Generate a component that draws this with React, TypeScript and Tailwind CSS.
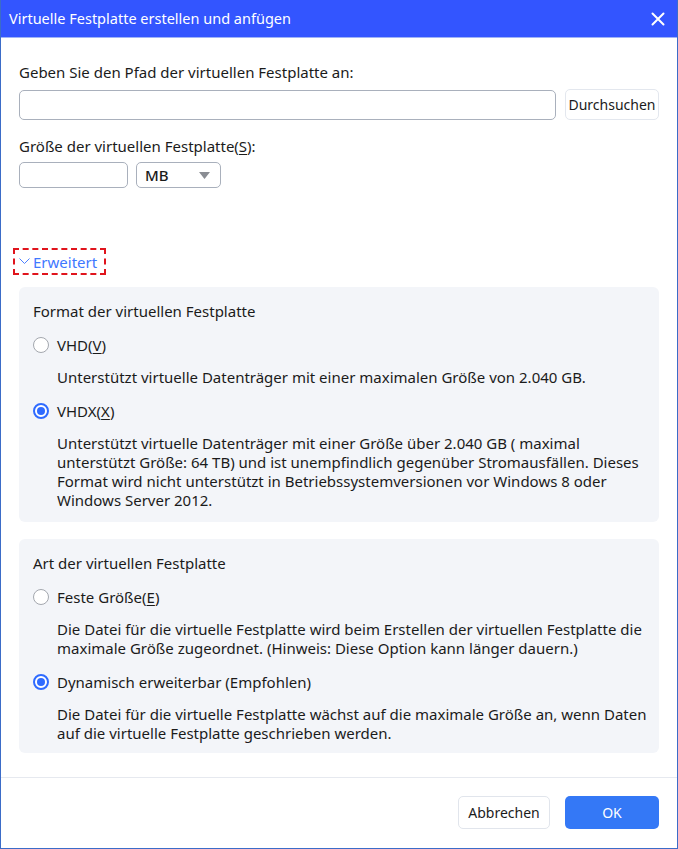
import React from 'react';

const font = { fontFamily: '"Noto Sans", "Open Sans", Arial, sans-serif' };

function Radio({ checked }: { checked?: boolean }) {
  return (
    <svg width="16" height="16" viewBox="0 0 16 16" className="shrink-0">
      {checked ? (
        <>
          <circle cx="8" cy="8" r="7" fill="#ffffff" stroke="#2f6bff" strokeWidth="2" />
          <circle cx="8" cy="8" r="4" fill="#2f6bff" />
        </>
      ) : (
        <circle cx="8" cy="8" r="7.5" fill="#ffffff" stroke="#a3a7ae" strokeWidth="1" />
      )}
    </svg>
  );
}

function Option({
  label,
  hotkey,
  checked,
  lines,
}: {
  label: string;
  hotkey?: string;
  checked?: boolean;
  lines: string[];
}) {
  return (
    <div className="mt-[14px]">
      <div className="flex items-center gap-[8px] h-5">
        <Radio checked={checked} />
        <span className="text-[15px] leading-5 text-[#1b1b1b]">
          {label}
          {hotkey && (
            <>
              (<span className="underline underline-offset-2">{hotkey}</span>)
            </>
          )}
        </span>
      </div>
      <div className="mt-[13px] ml-[24px] text-[15px] leading-[19px] text-[#1b1b1b] whitespace-nowrap">
        {lines.map((l) => (
          <div key={l}>{l}</div>
        ))}
      </div>
    </div>
  );
}

export default function App() {
  return (
    <div
      style={font}
      className="w-[678px] h-[849px] bg-white border-x border-b border-[#3b6cc8] flex flex-col"
    >
      {/* Title bar */}
      <div className="h-[38px] bg-[#3355ff] border-b border-[#9fb3f7] flex items-center justify-between pl-2 pr-3 shrink-0">
        <span className="text-white text-[14.5px]">Virtuelle Festplatte erstellen und anfügen</span>
        <svg width="14" height="14" viewBox="0 0 14 14">
          <path d="M1.5 1.5 L12.5 12.5 M12.5 1.5 L1.5 12.5" stroke="#ffffff" strokeWidth="2" strokeLinecap="round" />
        </svg>
      </div>

      {/* Body */}
      <div className="flex-1 px-[18px]">
        <div className="mt-[24px] h-5 leading-5 text-[15px] text-[#1b1b1b]">
          Geben Sie den Pfad der virtuellen Festplatte an:
        </div>
        <div className="mt-[7px] flex items-center gap-[9px]">
          <div className="flex-1 h-[30px] rounded-[5px] border border-[#a9b0bc] bg-white" />
          <button className="h-[31px] w-[94px] rounded-[5px] border border-[#e3e7ee] bg-white text-[14px] text-[#1b1b1b]">
            Durchsuchen
          </button>
        </div>

        <div className="mt-4 h-5 leading-5 text-[15px] text-[#1b1b1b]">
          Größe der virtuellen Festplatte(<span className="underline underline-offset-2">S</span>):
        </div>
        <div className="mt-[6px] flex items-center gap-[8px]">
          <div className="w-[109px] h-[26px] rounded-[5px] border border-[#a9b0bc] bg-white" />
          <div className="w-[85px] h-[26px] rounded-[5px] border border-[#a9b0bc] bg-white flex items-center justify-between pl-[8px] pr-[10px]">
            <span className="text-[15px] font-medium text-[#1b1b1b]">MB</span>
            <svg width="11" height="7" viewBox="0 0 11 7">
              <path d="M0 0 L11 0 L5.5 7 Z" fill="#8a8d93" />
            </svg>
          </div>
        </div>

        {/* Erweitert */}
        <div className="mt-[60px] -ml-[6px] w-[93px] h-[27px] border-2 border-dashed border-[#e0141c] flex items-center gap-[3px] pl-[4px]">
          <svg width="11" height="7" viewBox="0 0 11 7">
            <path d="M0.5 0.5 L5.5 5.5 L10.5 0.5" stroke="#4d80ff" strokeWidth="1" fill="none" />
          </svg>
          <span className="text-[15px] leading-5 text-[#3f78ff]">Erweitert</span>
        </div>

        {/* Format panel */}
        <div className="mt-[12px] rounded-[6px] bg-[#f3f5f9] pl-[14px] pr-3 pt-[14px] pb-3">
          <div className="h-5 leading-5 text-[15px] text-[#1b1b1b]">Format der virtuellen Festplatte</div>
          <Option
            label="VHD"
            hotkey="V"
            lines={['Unterstützt virtuelle Datenträger mit einer maximalen Größe von 2.040 GB.']}
          />
          <Option
            label="VHDX"
            hotkey="X"
            checked
            lines={[
              'Unterstützt virtuelle Datenträger mit einer Größe über 2.040 GB ( maximal',
              'unterstützt Größe: 64 TB) und ist unempfindlich gegenüber Stromausfällen. Dieses',
              'Format wird nicht unterstützt in Betriebssystemversionen vor Windows 8 oder',
              'Windows Server 2012.',
            ]}
          />
        </div>

        {/* Type panel */}
        <div className="mt-[17px] rounded-[6px] bg-[#f3f5f9] pl-[14px] pr-3 pt-[14px] pb-[10px]">
          <div className="h-5 leading-5 text-[15px] text-[#1b1b1b]">Art der virtuellen Festplatte</div>
          <Option
            label="Feste Größe"
            hotkey="E"
            lines={[
              'Die Datei für die virtuelle Festplatte wird beim Erstellen der virtuellen Festplatte die',
              'maximale Größe zugeordnet. (Hinweis: Diese Option kann länger dauern.)',
            ]}
          />
          <Option
            label="Dynamisch erweiterbar (Empfohlen)"
            checked
            lines={[
              'Die Datei für die virtuelle Festplatte wächst auf die maximale Größe an, wenn Daten',
              'auf die virtuelle Festplatte geschrieben werden.',
            ]}
          />
        </div>
      </div>

      {/* Footer */}
      <div className="h-[71px] border-t border-[#e6e9ef] flex items-start justify-end gap-[15px] pt-[18px] pr-[18px] shrink-0">
        <button className="w-[92px] h-[33px] rounded-[5px] border border-[#e1e5ec] bg-white text-[14px] text-[#1b1b1b]">
          Abbrechen
        </button>
        <button className="w-[94px] h-[33px] rounded-[5px] bg-[#3478f6] text-[14px] text-white">
          OK
        </button>
      </div>
    </div>
  );
}
